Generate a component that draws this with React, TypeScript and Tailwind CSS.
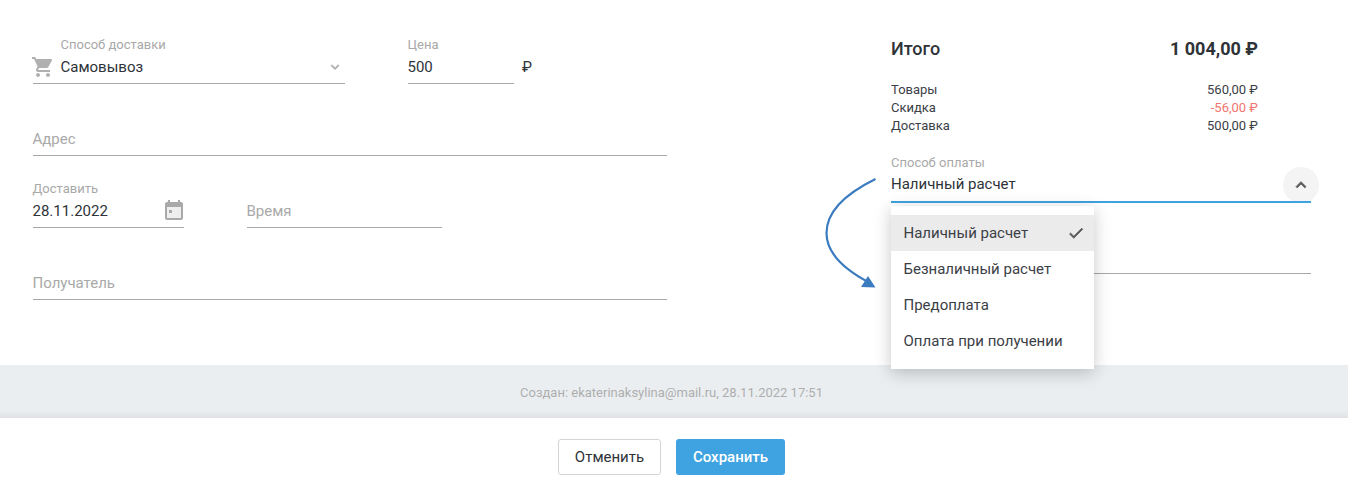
function Field({ label, value, className, children }: { label?: string; value?: string; className: string; children?: React.ReactNode }) {
  return (
    <div className={`relative h-[48px] border-b border-[#a8a8a8] ${className}`}>
      {label && <div className="absolute left-[-0.5px] top-[1px] text-[13px] leading-[16px] text-[#a9a9a9]">{label}</div>}
      {value ? (
        <div className="absolute left-[-0.5px] top-[22px] text-[15px] leading-[18px] text-[#2e3338]">{value}</div>
      ) : null}
      {children}
    </div>
  );
}

function Placeholder({ text }: { text: string }) {
  return <div className="absolute left-[-0.5px] top-[22px] text-[15px] leading-[18px] text-[#a9a9a9]">{text}</div>;
}

function Chevron({ up, className }: { up?: boolean; className: string }) {
  return (
    <svg className={className} viewBox="0 0 24 24" fill="currentColor">
      {up ? (
        <path d="M12 8l-6 6 1.41 1.41L12 10.83l4.59 4.58L18 14z" stroke="currentColor" strokeWidth="1" />
      ) : (
        <path d="M16.59 8.59L12 13.17 7.41 8.59 6 10l6 6 6-6z" stroke="currentColor" strokeWidth="1" />
      )}
    </svg>
  );
}

export default function App() {
  const options = ["Наличный расчет", "Безналичный расчет", "Предоплата", "Оплата при получении"];
  return (
    <div className="relative flex h-[489px] w-[1348px] flex-col overflow-hidden bg-white font-['Roboto',sans-serif]">
      <div className="flex h-[365px] pl-[33px] pt-[36px]">
        {/* left column */}
        <div className="flex w-[634px] flex-col gap-[24px]">
          <div className="flex gap-[63px]">
            <Field className="w-[312px]">
              <div className="absolute left-[27.5px] top-[1px] text-[13px] leading-[16px] text-[#a9a9a9]">Способ доставки</div>
              <div className="absolute left-[27.5px] top-[22px] text-[15px] leading-[18px] text-[#2e3338]">Самовывоз</div>
              <svg className="absolute left-[-2px] top-[19px] h-[24px] w-[24px]" viewBox="0 0 24 24" fill="#b0b0b0">
                <path d="M7 18c-1.1 0-1.99.9-1.99 2S5.9 22 7 22s2-.9 2-2-.9-2-2-2zM1 2v2h2l3.6 7.59-1.35 2.45c-.16.28-.25.61-.25.96 0 1.1.9 2 2 2h12v-2H7.42c-.14 0-.25-.11-.25-.25l.03-.12.9-1.63h7.45c.75 0 1.41-.41 1.75-1.03l3.58-6.49c.08-.14.12-.31.12-.48 0-.55-.45-1-1-1H5.21l-.94-2H1zm16 16c-1.1 0-1.99.9-1.99 2s.89 2 1.99 2 2-.9 2-2-.9-2-2-2z" />
              </svg>
              <Chevron className="absolute right-[2px] top-[23px] h-[16px] w-[16px] text-[#b0b0b0]" />
            </Field>
            <div className="flex items-start gap-[8px]">
              <Field label="Цена" value="500" className="w-[106px]" />
              <div className="pt-[22px] text-[15px] leading-[18px] text-[#2e3338]">₽</div>
            </div>
          </div>
          <Field className="w-full">
            <Placeholder text="Адрес" />
          </Field>
          <div className="flex gap-[63px]">
            <Field label="Доставить" value="28.11.2022" className="w-[151px]">
              <svg className="absolute left-[129px] top-[18px] h-[24px] w-[24px]" viewBox="0 0 24 24">
                <path d="M19 4h-1V2h-2v2H8V2H6v2H5c-1.1 0-2 .9-2 2v14c0 1.1.9 2 2 2h14c1.1 0 2-.9 2-2V6c0-1.1-.9-2-2-2z" fill="#a9a9a9" />
                <path d="M5 9h14v11H5z" fill="#eeeeee" />
                <path d="M7 12h3v3H7z" fill="#a9a9a9" />
              </svg>
            </Field>
            <Field className="w-[195px]">
              <Placeholder text="Время" />
            </Field>
          </div>
          <Field className="w-full">
            <Placeholder text="Получатель" />
          </Field>
        </div>

        {/* right column */}
        <div className="ml-[224px] w-[420px]">
          <div className="flex w-[367px] items-center justify-between pt-[2px]">
            <div className="text-[18px] font-medium leading-[22px] text-[#2e3338]">Итого</div>
            <div className="text-[18px] font-bold leading-[22px] text-[#2e3338]">1 004,00 ₽</div>
          </div>
          <div className="mt-[21px] w-[367px] text-[13px] leading-[18px] text-[#3b4046]">
            <div className="flex justify-between"><span>Товары</span><span>560,00 ₽</span></div>
            <div className="flex justify-between"><span>Скидка</span><span className="text-[#f2756f]">-56,00 ₽</span></div>
            <div className="flex justify-between"><span>Доставка</span><span>500,00 ₽</span></div>
          </div>
          <div className="relative mt-[19px] h-[49px]">
            <div className="absolute left-0 top-[1px] text-[13px] leading-[16px] text-[#a9a9a9]">Способ оплаты</div>
            <div className="absolute left-0 top-[21px] text-[15px] leading-[18px] text-[#2e3338]">Наличный расчет</div>
            <div className="absolute right-[-8px] top-[13px] flex h-[36px] w-[36px] items-center justify-center rounded-full bg-[#f4f4f4]">
              <Chevron up className="h-[20px] w-[20px] text-[#5a5a5a]" />
            </div>
            <div className="absolute inset-x-0 bottom-0 h-[2px] bg-[#3ea3e0]" />
          </div>
          <div className="mt-[23px] h-[48px] border-b border-[#a8a8a8]" />
        </div>
      </div>

      <div className="flex h-[53px] items-center justify-center bg-gradient-to-b from-[#ebeef1] via-[#ebeef1] via-85% to-[#dfe1e4] pr-[5px] pt-[2px] text-[13px] text-[#aeaeae]">
        Создан: ekaterinaksylina@mail.ru, 28.11.2022 17:51
      </div>

      <div className="flex flex-1 items-start justify-center gap-[15px] pr-[5px] pt-[21px]">
        <button className="h-[36px] w-[103px] rounded-[3px] border border-[#d4d4d4] bg-white text-[15px] text-[#2e3338]">Отменить</button>
        <button className="h-[36px] w-[109px] rounded-[3px] bg-[#3ea3e0] text-[15px] font-medium text-white">Сохранить</button>
      </div>

      {/* open dropdown */}
      <div className="absolute left-[891px] top-[206px] h-[163px] w-[203px] bg-white py-[9px] shadow-[0_4px_16px_rgba(0,0,0,0.22)]">
        {options.map((o, i) => (
          <div key={o} className={`flex h-[36px] items-center justify-between pl-[12.5px] pr-[9px] text-[15px] text-[#3b4046] ${i === 0 ? "bg-[#ebebeb]" : ""}`}>
            <span>{o}</span>
            {i === 0 && (
              <svg className="h-[18px] w-[18px] text-[#5a5a5a]" viewBox="0 0 24 24" fill="currentColor">
                <path d="M9 16.17L4.83 12l-1.42 1.41L9 19 21 7l-1.41-1.41z" stroke="currentColor" strokeWidth="1" />
              </svg>
            )}
          </div>
        ))}
      </div>

      {/* annotation arrow */}
      <svg className="absolute left-[820px] top-[170px] h-[125px] w-[60px]" viewBox="0 0 60 125" fill="none">
        <path d="M55.5 9C25 24 6.5 42 6.5 63C6.5 84 25 100 50 113" stroke="#3b7bbf" strokeWidth="2.2" />
        <path d="M55.5 117.5L41 117L48 106Z" fill="#3b7bbf" />
      </svg>
    </div>
  );
}
